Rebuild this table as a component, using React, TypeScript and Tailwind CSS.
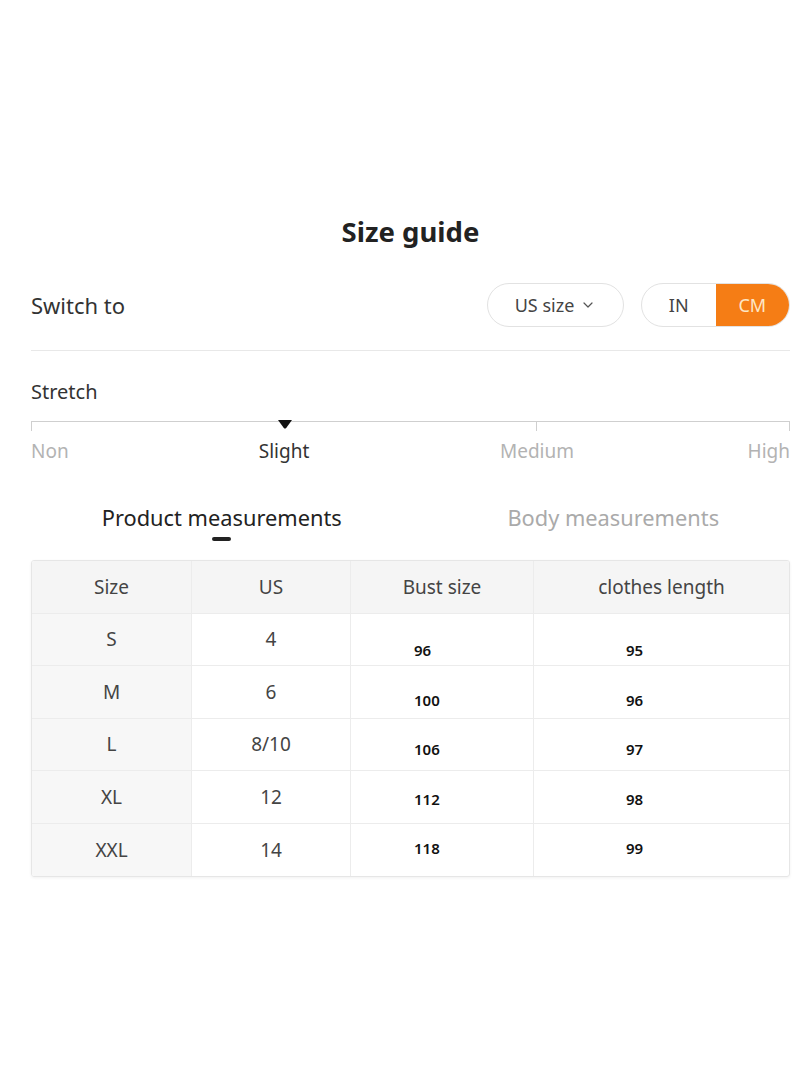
import React from "react";
import { ChevronDown } from "lucide-react";

const ROWS = [
  { size: "S", us: "4", bust: "96", length: "95", shift: 11 },
  { size: "M", us: "6", bust: "100", length: "96", shift: 8 },
  { size: "L", us: "8/10", bust: "106", length: "97", shift: 5 },
  { size: "XL", us: "12", bust: "112", length: "98", shift: 2 },
  { size: "XXL", us: "14", bust: "118", length: "99", shift: -2 },
];

function StretchScale() {
  return (
    <div>
      {/* track with ticks and the marker */}
      <div className="relative h-[18px] border-t border-[#cfcfcf]">
        <span className="absolute left-0 top-0 h-[9px] border-l border-[#cfcfcf]" />
        <span className="absolute left-[66.6%] top-0 h-[9px] border-l border-[#cfcfcf]" />
        <span className="absolute right-0 top-0 h-[9px] border-l border-[#cfcfcf]" />
        <svg
          viewBox="0 0 14 9"
          className="absolute left-[33.4%] top-[-2px] w-[15px] h-[9px] -translate-x-1/2"
        >
          <path d="M0 0 H14 L8.2 8 Q7 9.2 5.8 8 Z" fill="#111" />
        </svg>
      </div>
      <div className="grid grid-cols-6 text-[19px] leading-[24px]">
        <span className="text-[#b3b3b3]">Non</span>
        <span className="col-span-2 text-center text-[#333]">Slight</span>
        <span className="col-span-2 text-center text-[#b3b3b3]">Medium</span>
        <span className="text-right text-[#b3b3b3]">High</span>
      </div>
    </div>
  );
}

function SizeTable() {
  return (
    <div className="border border-[#e6e6e6] rounded-[3px] shadow-[0_1px_3px_rgba(0,0,0,0.06)] overflow-hidden">
      <div className="grid grid-cols-[160px_159px_183px_1fr] h-[53px] bg-[#f5f5f5] text-[19px] text-[#444] border-b border-[#ececec]">
        <div className="flex items-center justify-center border-r border-[#ececec]">Size</div>
        <div className="flex items-center justify-center border-r border-[#ececec]">US</div>
        <div className="flex items-center justify-center border-r border-[#ececec]">Bust size</div>
        <div className="flex items-center justify-center">clothes length</div>
      </div>
      {ROWS.map((r, i) => (
        <div
          key={r.size}
          className={`grid grid-cols-[160px_159px_183px_1fr] h-[52.4px] ${
            i < ROWS.length - 1 ? "border-b border-[#ececec]" : ""
          }`}
        >
          <div className="flex items-center justify-center bg-[#f7f7f7] border-r border-[#ececec] text-[19px] text-[#444]">
            {r.size}
          </div>
          <div className="flex items-center justify-center border-r border-[#ececec] text-[19px] text-[#444]">
            {r.us}
          </div>
          <div className="flex items-center pl-[63px] border-r border-[#ececec]">
            <span
              className="text-[15px] font-semibold text-[#111]"
              style={{ marginTop: r.shift * 2 }}
            >
              {r.bust}
            </span>
          </div>
          <div className="flex items-center pl-[92px]">
            <span
              className="text-[15px] font-semibold text-[#111]"
              style={{ marginTop: r.shift * 2 }}
            >
              {r.length}
            </span>
          </div>
        </div>
      ))}
    </div>
  );
}

export default function App() {
  return (
    <div
      className="w-[800px] h-[1067px] bg-white pl-[31px] pr-[10px] pt-[212px] text-[#333]"
      style={{ fontFamily: '"Noto Sans", "Open Sans", sans-serif' }}
    >
      <h1 className="text-center text-[27.5px] font-bold leading-[40px] text-[#222]">Size guide</h1>

      {/* unit switches */}
      <div className="mt-[31px] flex items-center justify-between h-[44px]">
        <span className="text-[22px] text-[#333]">Switch to</span>
        <div className="flex items-center gap-[17px]">
          <button className="flex items-center gap-[6px] h-[44px] w-[137px] justify-center rounded-full border border-[#e2e2e2] text-[18px] text-[#444]">
            US size
            <ChevronDown className="w-[16px] h-[16px] text-[#555]" strokeWidth={1.8} />
          </button>
          <div className="flex h-[44px] w-[149px] rounded-full border border-[#e2e2e2] overflow-hidden text-[18px]">
            <span className="flex-1 flex items-center justify-center text-[#444]">IN</span>
            <span className="flex-1 flex items-center justify-center bg-[#f57d15] text-[#fde7c6]">CM</span>
          </div>
        </div>
      </div>

      <div className="mt-[23px] border-t border-[#e8e8e8]" />

      <div className="mt-[27px] text-[20px] leading-[28px] text-[#333]">Stretch</div>
      <div className="mt-[15px]">
        <StretchScale />
      </div>

      {/* tabs */}
      <div className="mt-[40px] grid grid-cols-2">
        <div className="flex flex-col items-center pl-[2px]">
          <span className="text-[21.8px] leading-[30px] text-[#222]">Product measurements</span>
          <span className="mt-[4px] h-[4px] w-[19px] rounded-full bg-[#222]" />
        </div>
        <div className="flex flex-col items-center pl-[26px]">
          <span className="text-[21.8px] leading-[30px] text-[#aaa]">Body measurements</span>
        </div>
      </div>

      <div className="mt-[19px]">
        <SizeTable />
      </div>
    </div>
  );
}
